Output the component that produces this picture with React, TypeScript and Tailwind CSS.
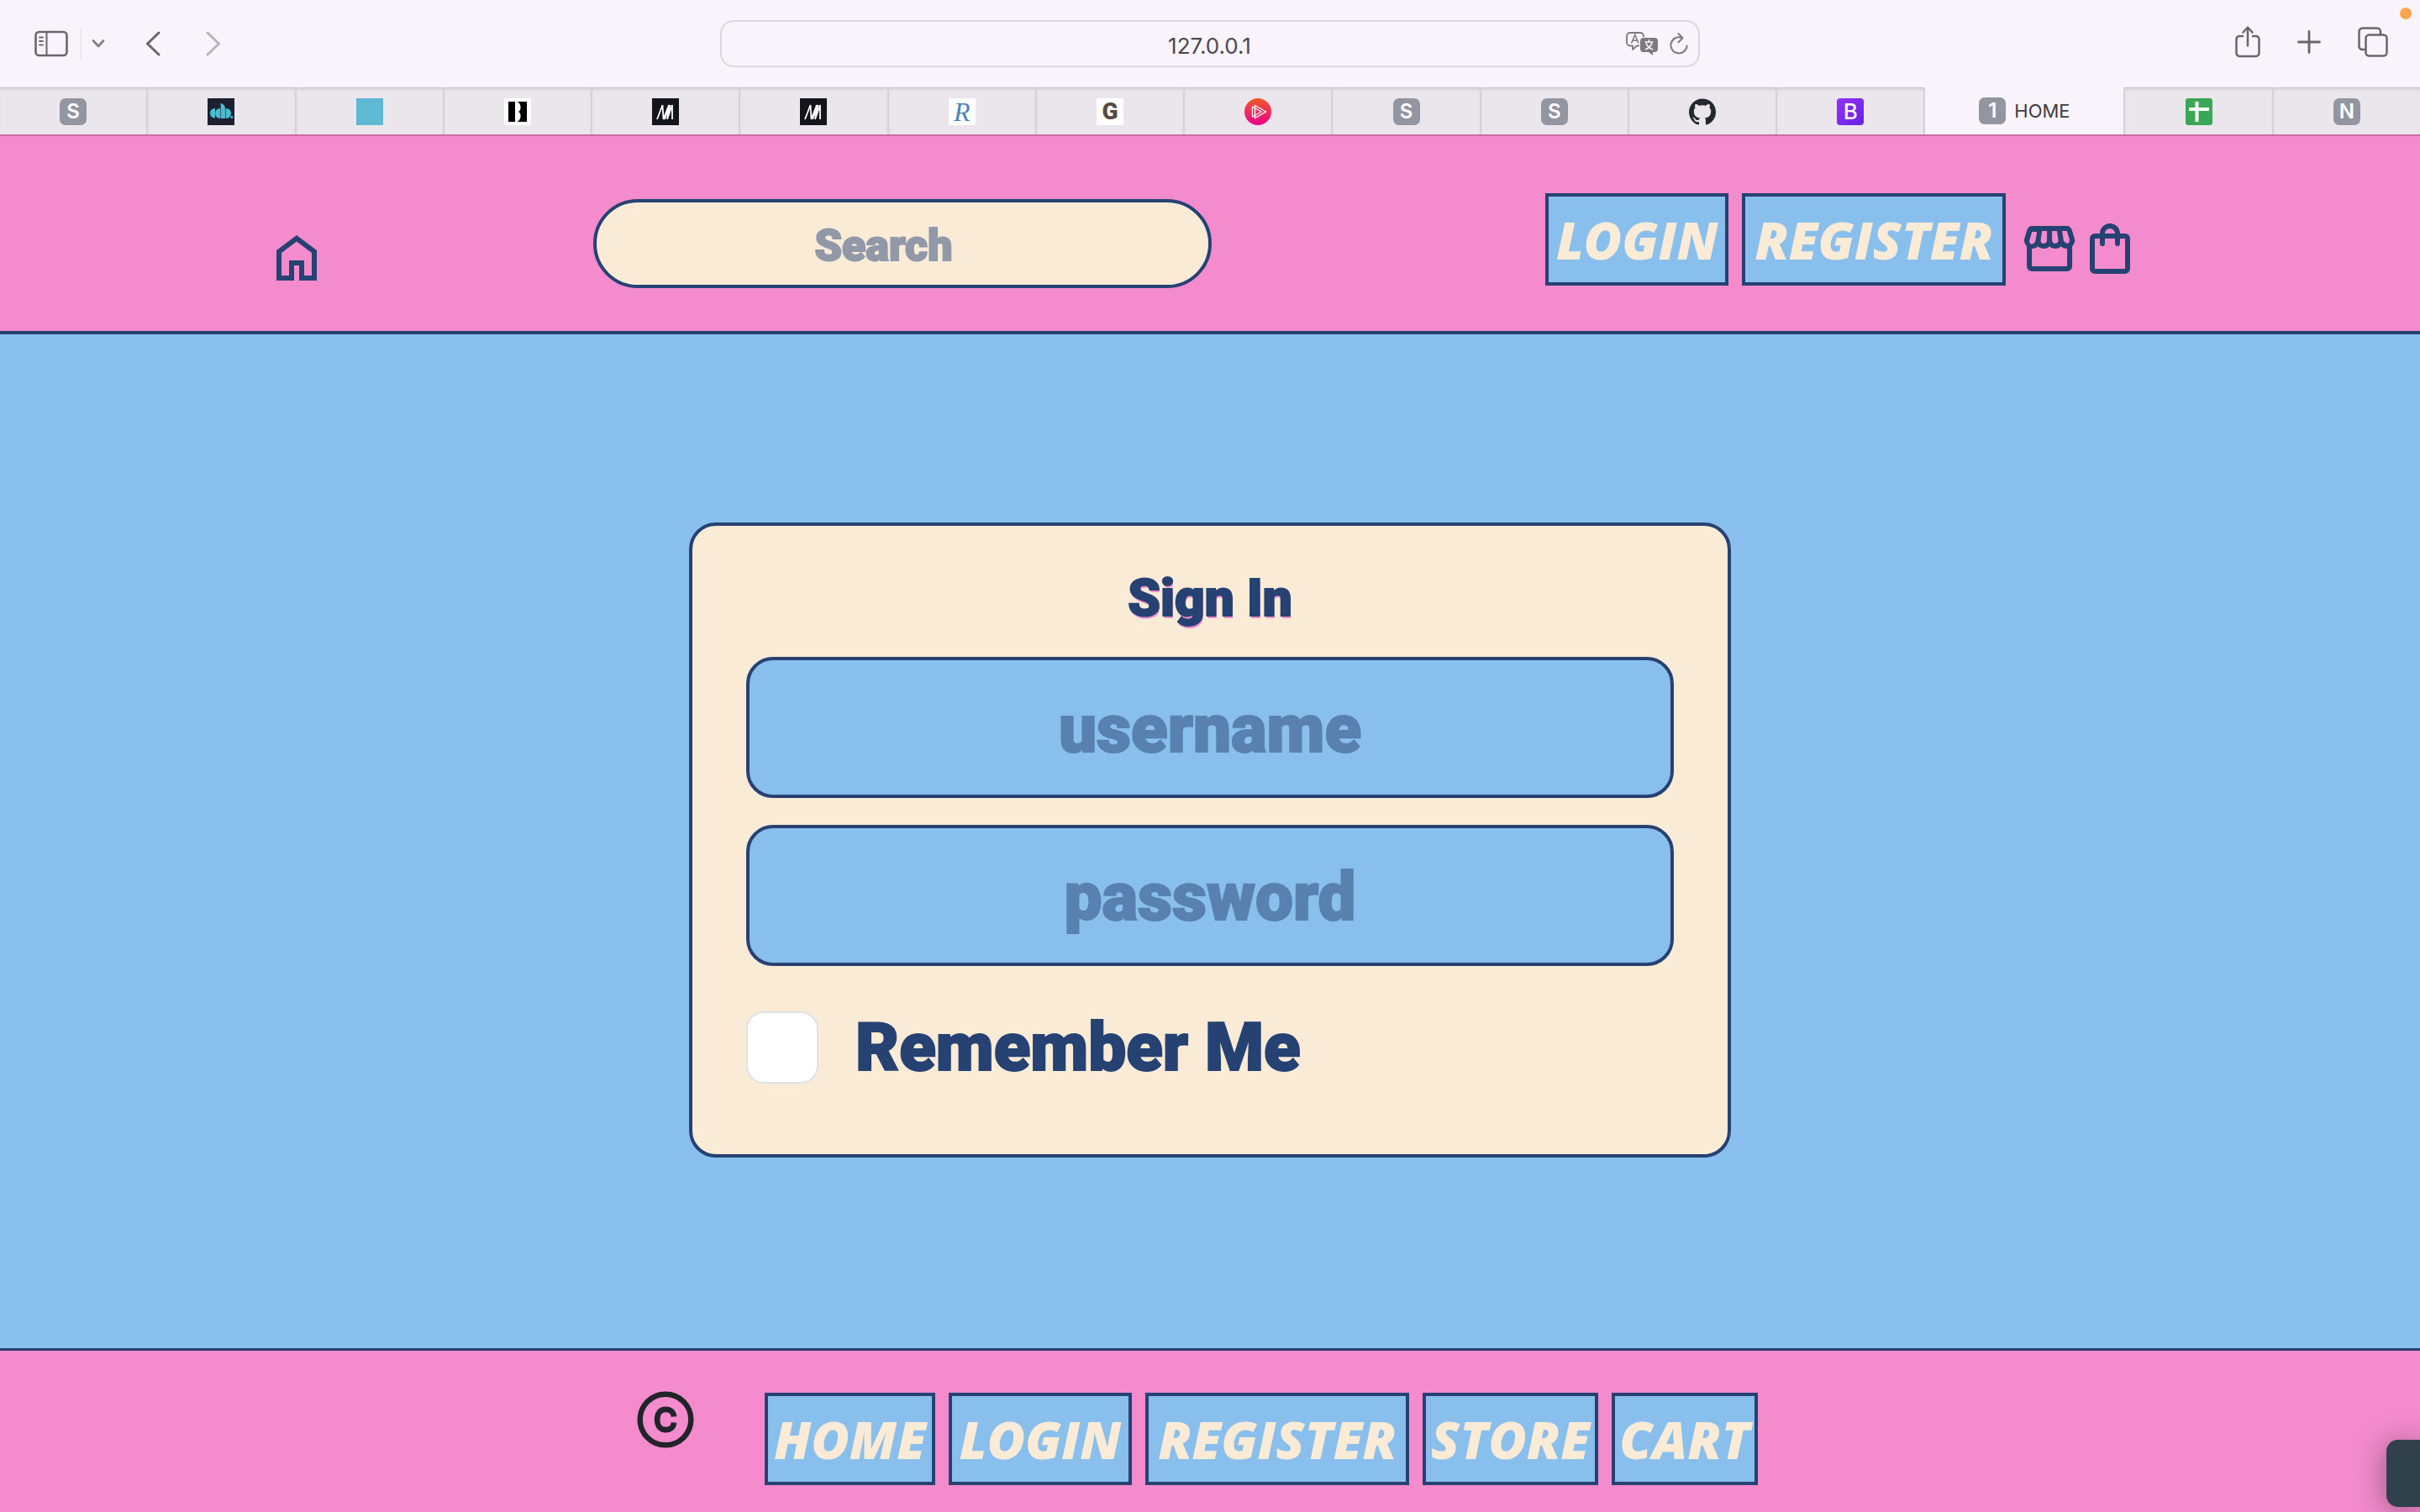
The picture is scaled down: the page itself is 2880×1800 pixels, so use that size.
import React from 'react';
import type { ReactNode } from 'react';
import { SiGithub } from 'react-icons/si';

const HomeIcon = () => (
  <svg viewBox="0 -960 960 960" className="size-[72px]" fill="currentColor" aria-hidden="true">
    <path d="M240-200h120v-240h240v240h120v-360L480-740 240-560v360Zm-80 80v-480l320-240 320 240v480H520v-240h-80v240H160Zm320-350Z" />
  </svg>
);

const StoreIcon = () => (
  <svg viewBox="0 -960 960 960" className="size-[72px]" fill="currentColor" aria-hidden="true">
    <path d="M841-518v318q0 33-23.5 56.5T761-120H201q-33 0-56.5-23.5T121-200v-318q-23-21-35.5-54t-.5-72l42-136q8-26 28.5-43t47.5-17h556q27 0 47 16.5t29 43.5l42 136q12 39-.5 71T841-518Zm-272-42q27 0 41-18.5t11-41.5l-22-140h-78v148q0 21 14 36.5t34 15.5Zm-180 0q23 0 37.5-15.5T441-612v-148h-78l-22 140q-4 24 10.5 42t37.5 18Zm-178 0q18 0 31.5-13t16.5-33l22-140h-78l-40 134q-6 20 6.5 43t41.5 23Zm540 0q29 0 42-23t6-43l-42-134h-76l22 140q3 20 16.5 33t31.5 13ZM201-200h560v-282q-5 2-6.5 2H751q-27 0-47.5-9T663-518q-18 18-41 28t-49 10q-27 0-50.5-10T481-518q-17 18-39.5 28T393-480q-29 0-52.5-10T299-518q-21 21-41.5 29.5T211-480h-4.5q-2.5 0-5.5-2v282Z" />
  </svg>
);

const BagIcon = () => (
  <svg viewBox="0 -960 960 960" className="size-[72px]" fill="currentColor" aria-hidden="true">
    <path d="M240-80q-33 0-56.5-23.5T160-160v-480q0-33 23.5-56.5T240-720h80q0-66 47-113t113-47q66 0 113 47t47 113h80q33 0 56.5 23.5T800-640v480q0 33-23.5 56.5T720-80H240Zm0-80h480v-480h-80v80q0 17-11.5 28.5T600-520q-17 0-28.5-11.5T560-560v-80H400v80q0 17-11.5 28.5T360-520q-17 0-28.5-11.5T320-560v-80h-80v480Zm160-560h160q0-33-23.5-56.5T480-800q-33 0-56.5 23.5T400-720Z" />
  </svg>
);

const CopyrightIcon = () => (
  <svg viewBox="0 0 80 80" className="size-20 shrink-0" fill="none" stroke="#212529" role="img" aria-label="Copyright">
    <circle cx="40" cy="40" r="30.3" strokeWidth="6.4" />
    <path d="M50 36.5c-.4-5.600-4.300-8.600-9.700-8.600-6.200 0-10.200 4.200-10.200 12.100s4 12.100 10.200 12.100c5.400 0 9.300-3 9.700-8.600" strokeWidth="6.600" />
  </svg>
);

const SidebarIcon = () => (
  <svg viewBox="0 0 40 32" className="h-8 w-10" fill="none" stroke="#6b656c" strokeWidth="2.600" strokeLinecap="round" aria-hidden="true">
    <rect x="1.500" y="2" width="37" height="28" rx="4" />
    <path d="M14.500 2v28" strokeWidth="2" />
    <path d="M6 8.500h4M6 13h4M6 17.500h4" strokeWidth="1.800" />
  </svg>
);

const Chevron = ({ d, className }: { d: string; className: string }) => (
  <svg viewBox="0 0 18 30" className={className} fill="none" stroke="currentColor" strokeWidth="3" strokeLinecap="round" strokeLinejoin="round" aria-hidden="true">
    <path d={d} />
  </svg>
);

const TranslateIcon = () => (
  <svg viewBox="0 0 38 28" className="h-7 w-[38px]" fill="none" aria-hidden="true">
    <path d="M16 16.500h-3l-5 4.500v-4.500H5a4 4 0 0 1-4-4V5a4 4 0 0 1 4-4h12a4 4 0 0 1 4 4v1" stroke="#7e787f" strokeWidth="1.800" strokeLinejoin="round" />
    <path d="M6.500 13.500l4.300-10 4.300 10M8 10.300h5.600" stroke="#7e787f" strokeWidth="1.600" />
    <path d="M21 7h13a4 4 0 0 1 4 4v9a4 4 0 0 1-4 4h-2v4l-5-4h-6a4 4 0 0 1-4-4v-9a4 4 0 0 1 4-4Z" fill="#7e787f" />
    <path d="M27.500 9v3M22.500 12h10M24 13c1 4 4 6.500 8 8M31 13c-1 4-4 6.500-8 8" stroke="#f9f4fb" strokeWidth="1.600" />
  </svg>
);

const ReloadIcon = () => (
  <svg viewBox="0 0 22 28" className="h-7 w-[22px]" fill="none" stroke="#7e787f" strokeWidth="2" strokeLinecap="round" strokeLinejoin="round" aria-hidden="true">
    <path d="M14.500 6.900A9.600 9.600 0 1 0 20.600 16.500" />
    <path d="M10.500 2l5 5.200-5 5" />
  </svg>
);

const ShareIcon = () => (
  <svg viewBox="0 0 30 38" className="h-[38px] w-[30px]" fill="none" stroke="#6b656c" strokeWidth="2.500" strokeLinecap="round" strokeLinejoin="round" aria-hidden="true">
    <path d="M9 12H5a3.500 3.500 0 0 0-3.500 3.500v17A3.500 3.500 0 0 0 5 36h20a3.500 3.500 0 0 0 3.500-3.500v-17A3.500 3.500 0 0 0 25 12h-4" />
    <path d="M15 23.500V2M9.500 7.500 15 1.500 20.500 7.500" />
  </svg>
);

const PlusIcon = () => (
  <svg viewBox="0 0 28 28" className="size-7" stroke="#6b656c" strokeWidth="2.800" strokeLinecap="round" aria-hidden="true">
    <path d="M14 1.500v25M1.500 14h25" />
  </svg>
);

const TabsIcon = () => (
  <svg viewBox="0 0 36 36" className="size-9" fill="none" stroke="#6b656c" strokeWidth="2.500" strokeLinejoin="round" aria-hidden="true">
    <rect x="9.500" y="9.500" width="25" height="25" rx="4" />
    <path d="M9.500 27H5.500A4 4 0 0 1 1.500 23V5.500a4 4 0 0 1 4-4H23a4 4 0 0 1 4 4v4" />
  </svg>
);

const Letter = ({ children }: { children: string }) => (
  <span className="flex size-8 items-center justify-center rounded-[7px] bg-[#9395a0] text-[24px] leading-none font-semibold text-white">{children}</span>
);

const MarkM = () => (
  <svg viewBox="0 0 32 32" className="size-8" fill="none" aria-hidden="true">
    <path d="M0 0h32v32H0z" fill="#14141b" />
    <path d="M6 25 12.500 8 13.500 25 20 8M18 25 24 8v17M15 25 21.500 8 18 25" stroke="#fff" strokeWidth="1.800" />
  </svg>
);

const Wave = () => (
  <svg viewBox="0 0 32 32" className="size-8" aria-hidden="true">
    <path d="M0 0h32v32H0z" fill="#1e2030" />
    <g fill="#49bcd0">
      <path d="M9 12v11.500C5 23.500 3 21 3 17.800S5 12 9 12Z" />
      <path d="M15 12v12c-4 0-5.800-2.800-5.800-6S11 12 15 12Z" />
      <path d="M15.600 6c3.500.5 5.400 3 5.400 7v11h-5.400V6Z" />
      <path d="M21.600 12c4.400 0 6.400 2.800 6.400 6s-2 6-6.400 6V12Z" />
      <circle cx="28.800" cy="22.500" r="1.500" />
    </g>
  </svg>
);

const BlackB = () => (
  <svg viewBox="0 0 32 32" className="size-8" aria-hidden="true">
    <path d="M0 0h32v32H0z" fill="#fff" />
    <path d="M5 4h22v24H5z" fill="#000" />
    <path d="M13 4h2c5.500 1.500 6 10 2 12 4 2 3.500 10.500-2 12h-2V4Z" fill="#fff" />
  </svg>
);

const PlayMark = () => (
  <svg viewBox="0 0 32 32" className="size-8" fill="none" aria-hidden="true">
    <defs>
      <linearGradient id="play" x1="0" y1="0" x2="0" y2="1">
        <stop stopColor="#f05a28" />
        <stop offset="1" stopColor="#ec008c" />
      </linearGradient>
    </defs>
    <circle cx="16" cy="16" r="16" fill="url(#play)" />
    <path d="M12.500 8.500 25.500 16l-13 7.500Z M9.500 10v12L20 16Z" stroke="#fff" strokeWidth="1.300" />
  </svg>
);

const SheetMark = () => (
  <svg viewBox="0 0 32 32" className="size-8" aria-hidden="true">
    <rect width="32" height="32" rx="3" fill="#3aa757" />
    <path d="M11.500 4h4v7H28v4H15.500v13h-4V15H4v-4h7.500V4Z" fill="#fff" />
  </svg>
);

type Tab = { name: string; icon: ReactNode; active?: boolean };

const tabs: Tab[] = [
  { name: 'S', icon: <Letter>S</Letter> },
  { name: 'Codebar', icon: <Wave /> },
  { name: 'Blank', icon: <span className="block size-8 bg-[#5fb9d3]" /> },
  { name: 'B', icon: <BlackB /> },
  { name: 'M', icon: <MarkM /> },
  { name: 'M', icon: <MarkM /> },
  { name: 'R', icon: <span className="flex size-8 items-center justify-center bg-white font-['Liberation_Serif',serif] text-[32px] leading-none text-[#4a86b4] italic">R</span> },
  { name: 'G', icon: <span className="flex size-8 items-center justify-center bg-white font-['Roboto',sans-serif] text-[28px] leading-none font-black text-[#574a42]">G</span> },
  { name: 'Play', icon: <PlayMark /> },
  { name: 'S', icon: <Letter>S</Letter> },
  { name: 'S', icon: <Letter>S</Letter> },
  { name: 'GitHub', icon: <SiGithub className="size-8 text-[#24292f]" /> },
  { name: 'B', icon: <span className="flex size-8 items-center justify-center rounded bg-linear-to-br from-[#9530fb] to-[#6522e2] text-[26px] leading-none font-medium text-white">B</span> },
  { name: 'HOME', icon: <Letter>1</Letter>, active: true },
  { name: 'Sheet', icon: <SheetMark /> },
  { name: 'N', icon: <Letter>N</Letter> },
];

function Browser() {
  return (
    <div className="relative bg-[#f9f4fb] font-['Inter',sans-serif]">
      <span className="absolute top-[9px] right-2.5 size-3.5 rounded-full bg-[#fda650]" />
      <div className="grid h-[104px] grid-cols-[1fr_40.5%_1fr] items-center">
        <div className="flex items-center pl-[41px] text-[#6b656c]">
          <button aria-label="Sidebar"><SidebarIcon /></button>
          <span className="ml-3.5 h-9 w-0.5 bg-[#ebe5ec]" />
          <button aria-label="Tab groups" className="ml-3 text-[#857f88]">
            <svg viewBox="0 0 16 12" className="h-3 w-4" fill="none" stroke="currentColor" strokeWidth="2.800" strokeLinecap="round" strokeLinejoin="round" aria-hidden="true">
              <path d="M2 2.500 8 9l6-6.500" />
            </svg>
          </button>
          <button aria-label="Back" className="ml-12"><Chevron d="M16 2 2.500 15 16 28" className="h-[30px] w-[18px]" /></button>
          <button aria-label="Forward" className="ml-[54px] text-[#bab5bc]"><Chevron d="M2 2 15.500 15 2 28" className="h-[30px] w-[18px]" /></button>
        </div>
        <div className="flex h-14 items-center rounded-2xl border-2 border-[#dcd7de] pr-3 pl-[85px]">
          <input aria-label="Address" defaultValue="127.0.0.1" className="min-w-0 flex-1 bg-transparent pt-1 text-center text-[26px] text-[#4b474d] outline-none" />
          <button aria-label="Translate"><TranslateIcon /></button>
          <button aria-label="Reload" className="ml-3.5"><ReloadIcon /></button>
        </div>
        <div className="flex items-center justify-end gap-11 pr-[38px] pb-1">
          <button aria-label="Share"><ShareIcon /></button>
          <button aria-label="New tab"><PlusIcon /></button>
          <button aria-label="Tab overview"><TabsIcon /></button>
        </div>
      </div>
      <nav aria-label="Tabs" className="flex h-14">
        {tabs.map((tab, i) =>
          tab.active ? (
            <a key={i} href="#home" className="flex w-[238px] items-center justify-center gap-2.5 border-r-2 border-[#d5d1d7] text-[22px] text-[#3f3b42]">
              {tab.icon}
              {tab.name}
            </a>
          ) : (
            <a key={i} href="#tab" aria-label={tab.name} className="flex flex-1 items-center justify-center border-t border-r-2 border-t-[#c6c2c8] border-r-[#d5d1d7] bg-[#ebe6ec] shadow-[inset_0_3px_3px_-1px_#d9d5da] last:border-r-0">
              {tab.icon}
            </a>
          ),
        )}
      </nav>
    </div>
  );
}

const widths: Record<string, string> = {
  HOME: 'w-[203px]',
  LOGIN: 'w-[218px]',
  REGISTER: 'w-[314px]',
  STORE: 'w-[209px]',
  CART: 'w-[174px]',
};

const Comic = ({ label }: { label: string }) => (
  <button className={`h-[110px] border-4 border-[#264273] bg-[#89bfec] text-center font-['Open_Sans',sans-serif] text-[62px] leading-none font-extrabold text-[#faebd7] italic ${widths[label]}`}>{label}</button>
);

const Field = ({ label, type }: { label: string; type: string }) => (
  <input
    type={type}
    aria-label={label}
    placeholder={label}
    className="h-[168px] w-full rounded-[32px] border-4 border-[#264273] bg-[#89bfec] px-6 pt-1 text-center text-[80px] font-black text-[#264273] outline-none placeholder:text-[#5881b0] placeholder:[-webkit-text-stroke:2px_#5881b0]"
  />
);

export default function App() {
  return (
    <div className="relative flex min-h-screen flex-col overflow-hidden bg-[#89bfec] font-['Roboto',sans-serif] text-[#264273]">
      <Browser />
      <header className="flex h-[238px] items-end border-t-2 border-b-4 border-t-[#cf6aa9] border-b-[#264273] bg-[#f38bcd] px-[11%] pb-[51px]">
        <a href="#home" aria-label="Home"><HomeIcon /></a>
        <input
          type="search"
          aria-label="Search"
          placeholder="Search"
          className="ml-[14.1%] h-[106px] w-[32.8%] rounded-full border-4 border-[#264273] bg-[#faebd7] pt-1 pr-5 text-center text-[52px] font-black outline-none placeholder:text-[#9199a8] placeholder:[-webkit-text-stroke:2px_#9199a8]"
        />
        <nav aria-label="Main" className="mr-4 mb-[3px] ml-auto flex items-end">
          <div className="mr-4 flex gap-4">
            <Comic label="LOGIN" />
            <Comic label="REGISTER" />
          </div>
          <a href="#store" aria-label="Store" className="mb-2"><StoreIcon /></a>
          <a href="#cart" aria-label="Cart" className="mb-2"><BagIcon /></a>
        </nav>
      </header>
      <main className="flex flex-1 items-center justify-center pb-1">
        <form className="w-[43.06%] rounded-[32px] border-4 border-[#264273] bg-[#faebd7] px-16 pt-10 pb-[84px]">
          <h1 className="mb-6 text-center text-[62px] leading-[92px] font-black [-webkit-text-stroke:2px_#264273] [text-shadow:1px_3px_0_#f38bcd]">Sign In</h1>
          <div className="flex flex-col gap-8">
            <Field label="username" type="text" />
            <Field label="password" type="password" />
          </div>
          <div className="mt-[54px] flex h-[86px] items-center gap-11">
            <input id="remember" type="checkbox" className="size-[86px] appearance-none rounded-[21px] border-2 border-[#dee2e6] bg-white checked:bg-[#264273]" />
            <label htmlFor="remember" className="text-[80px] leading-none font-black [-webkit-text-stroke:2px_#264273]">Remember Me</label>
          </div>
        </form>
      </main>
      <footer className="flex h-[195px] items-start justify-center gap-[78px] border-t-3 border-[#264273] bg-[#f38bcd] pt-[42px] pr-9">
        <CopyrightIcon />
        <nav aria-label="Footer" className="mt-2 flex gap-4">
          <Comic label="HOME" />
          <Comic label="LOGIN" />
          <Comic label="REGISTER" />
          <Comic label="STORE" />
          <Comic label="CART" />
        </nav>
      </footer>
      <div className="absolute right-0 bottom-1.5 h-20 w-10 rounded-l-[14px] bg-[#31414b] shadow-[0_4px_36px_rgba(0,0,0,0.4)]" />
    </div>
  );
}
